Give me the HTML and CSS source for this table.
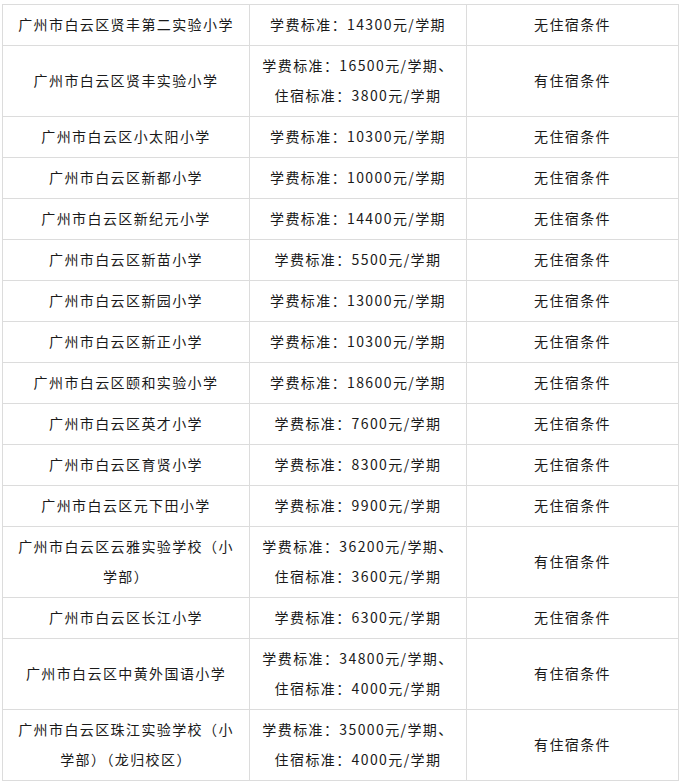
FILE: index.html
```html
<!DOCTYPE html>
<html lang="zh-CN">
<head>
<meta charset="utf-8">
<title>学校收费</title>
<link rel="stylesheet" href="styles.css">
</head>
<body>
<table class="fees">
<colgroup><col class="c1"><col class="c2"><col class="c3"></colgroup>
<tbody>
<tr><td>广州市白云区贤丰第二实验小学</td><td>学费标准：14300元/学期</td><td>无住宿条件</td></tr>
<tr><td>广州市白云区贤丰实验小学</td><td>学费标准：16500元/学期、<br>住宿标准：3800元/学期</td><td>有住宿条件</td></tr>
<tr><td>广州市白云区小太阳小学</td><td>学费标准：10300元/学期</td><td>无住宿条件</td></tr>
<tr><td>广州市白云区新都小学</td><td>学费标准：10000元/学期</td><td>无住宿条件</td></tr>
<tr><td>广州市白云区新纪元小学</td><td>学费标准：14400元/学期</td><td>无住宿条件</td></tr>
<tr><td>广州市白云区新苗小学</td><td>学费标准：5500元/学期</td><td>无住宿条件</td></tr>
<tr><td>广州市白云区新园小学</td><td>学费标准：13000元/学期</td><td>无住宿条件</td></tr>
<tr><td>广州市白云区新正小学</td><td>学费标准：10300元/学期</td><td>无住宿条件</td></tr>
<tr><td>广州市白云区颐和实验小学</td><td>学费标准：18600元/学期</td><td>无住宿条件</td></tr>
<tr><td>广州市白云区英才小学</td><td>学费标准：7600元/学期</td><td>无住宿条件</td></tr>
<tr><td>广州市白云区育贤小学</td><td>学费标准：8300元/学期</td><td>无住宿条件</td></tr>
<tr><td>广州市白云区元下田小学</td><td>学费标准：9900元/学期</td><td>无住宿条件</td></tr>
<tr><td>广州市白云区云雅实验学校（小<br>学部）</td><td>学费标准：36200元/学期、<br>住宿标准：3600元/学期</td><td>有住宿条件</td></tr>
<tr><td>广州市白云区长江小学</td><td>学费标准：6300元/学期</td><td>无住宿条件</td></tr>
<tr><td>广州市白云区中黄外国语小学</td><td>学费标准：34800元/学期、<br>住宿标准：4000元/学期</td><td>有住宿条件</td></tr>
<tr><td>广州市白云区珠江实验学校（小<br>学部）（龙归校区）</td><td>学费标准：35000元/学期、<br>住宿标准：4000元/学期</td><td>有住宿条件</td></tr>
</tbody>
</table>
</body>
</html>
```
FILE: styles.css
```css
html, body {
  margin: 0;
  padding: 0;
  background: #fff;
}
body {
  padding: 4px 0 0 2px;
}
.fees {
  border-collapse: collapse;
  table-layout: fixed;
  width: 676px;
  font-family: "Noto Sans CJK SC", "Liberation Sans", sans-serif;
  font-size: 14px;
  color: #1a1a1a;
}
.c1 { width: 247px; }
.c2 { width: 217px; }
.c3 { width: 212px; }
.fees td {
  border: 1px solid #dcdcdc;
  padding: 4px 0 6px;
  line-height: 30px;
  text-align: center;
  vertical-align: middle;
  letter-spacing: 1.4px;
  white-space: nowrap;
}
```
